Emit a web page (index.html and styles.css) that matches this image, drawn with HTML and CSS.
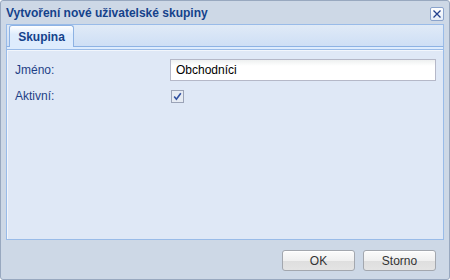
FILE: index.html
```html
<!DOCTYPE html>
<html lang="cs">
<head>
<meta charset="utf-8">
<title>Vytvoření nové uživatelské skupiny</title>
<link rel="stylesheet" href="styles.css">
</head>
<body>
<div class="window">
  <div class="titlebar">
    <span class="title">Vytvoření nové uživatelské skupiny</span>
    <span class="close">
      <svg width="12" height="12" viewBox="0 0 12 12"><path d="M2.5 2.5 L9.5 9.5 M9.5 2.5 L2.5 9.5" stroke="#23408e" stroke-width="1.3" fill="none"/></svg>
    </span>
  </div>
  <div class="tabpanel">
    <div class="strip">
      <div class="tab">Skupina</div>
    </div>
    <div class="spacer"></div>
    <div class="panelbody">
      <div class="row">
        <label class="label">Jméno:</label>
        <div class="field">Obchodníci</div>
      </div>
      <div class="row row-check">
        <label class="label">Aktivní:</label>
        <span class="check">
          <svg width="13" height="13" viewBox="0 0 13 13"><rect x="0.5" y="0.5" width="12" height="12" fill="#e6ebf3" stroke="#9ba3b7"/><path d="M3.2 6.6 L5.4 9.3 L9.8 3.2" stroke="#3050a0" stroke-width="1.6" fill="none"/></svg>
        </span>
      </div>
    </div>
  </div>
  <div class="footer">
    <button class="btn">OK</button>
    <button class="btn">Storno</button>
  </div>
</div>
</body>
</html>
```
FILE: styles.css
```css
html, body {
  margin: 0;
  padding: 0;
}
body {
  font-family: "Liberation Sans", Arial, sans-serif;
  font-size: 12px;
  background: #ffffff;
}
.window {
  width: 450px;
  height: 280px;
  box-sizing: border-box;
  border: 1px solid #98a8bf;
  border-radius: 3px;
  background: #cdd8e6;
  display: flex;
  flex-direction: column;
}
.titlebar {
  height: 23px;
  display: flex;
  align-items: center;
  justify-content: space-between;
  padding: 0 5px 0 5px;
}
.title {
  font-weight: bold;
  font-size: 12px;
  color: #15428b;
  margin-top: 1px;
}
.close {
  width: 14px;
  height: 14px;
  box-sizing: border-box;
  border: 1px solid #8aa3cc;
  border-radius: 2px;
  background: linear-gradient(#ffffff, #e4ecf8);
  display: flex;
  align-items: center;
  justify-content: center;
  margin-top: 3px;
}
.tabpanel {
  flex: 1;
  margin: 0 5px;
  display: flex;
  flex-direction: column;
}
.strip {
  height: 23px;
  box-sizing: border-box;
  border: 1px solid #99bbe8;
  border-bottom: 1px solid #8db2e3;
  background: linear-gradient(#e0eaf7, #cedff5);
  padding: 1px 0 0 2px;
  display: flex;
  align-items: flex-end;
}
.tab {
  width: 65px;
  height: 22px;
  box-sizing: border-box;
  margin-bottom: -1px;
  border: 1px solid #8db2e3;
  border-bottom: none;
  border-radius: 3px 3px 0 0;
  background: linear-gradient(#ffffff, #deecfd 40%, #deecfd);
  color: #15428b;
  font-weight: bold;
  font-size: 12px;
  display: flex;
  align-items: center;
  justify-content: center;
  padding-top: 1px;
}
.spacer {
  height: 2px;
  border: 1px solid #99bbe8;
  border-top: none;
  border-bottom: 1px solid #99bbe8;
  background: #deecfd;
}
.panelbody {
  flex: 1;
  border: 1px solid #99bbe8;
  border-top: none;
  background: #dfe8f6;
  box-shadow: inset 1px 1px 0 #f2f6fc;
  padding: 9px 7px 8px 8px;
  display: flex;
  flex-direction: column;
  gap: 4px;
}
.row {
  display: flex;
  align-items: center;
  height: 22px;
}
.label {
  width: 155px;
  color: #1e3f86;
  font-size: 12px;
}
.field {
  flex: 1;
  height: 22px;
  box-sizing: border-box;
  border: 1px solid #b5b8c8;
  background: linear-gradient(#eef0f0, #ffffff 6px, #ffffff);
  padding: 0 5px;
  display: flex;
  align-items: center;
  color: #000;
  font-size: 12px;
}
.row-check {
  height: 22px;
}
.check {
  display: flex;
  width: 13px;
  height: 13px;
  margin-left: 1px;
}
.footer {
  height: 39px;
  box-sizing: border-box;
  padding: 10px 13px 0 0;
  display: flex;
  justify-content: flex-end;
  align-items: flex-start;
  gap: 8px;
}
.btn {
  width: 73px;
  height: 21px;
  box-sizing: border-box;
  border: 1px solid #a3a7ae;
  border-radius: 3px;
  background: linear-gradient(#fbfbfb, #f0f0f0 50%, #dedede 51%, #e4e4e4);
  font-family: "Liberation Sans", Arial, sans-serif;
  font-size: 12px;
  color: #333;
  padding: 0;
  box-shadow: inset 0 1px 0 #ffffff;
}
```
